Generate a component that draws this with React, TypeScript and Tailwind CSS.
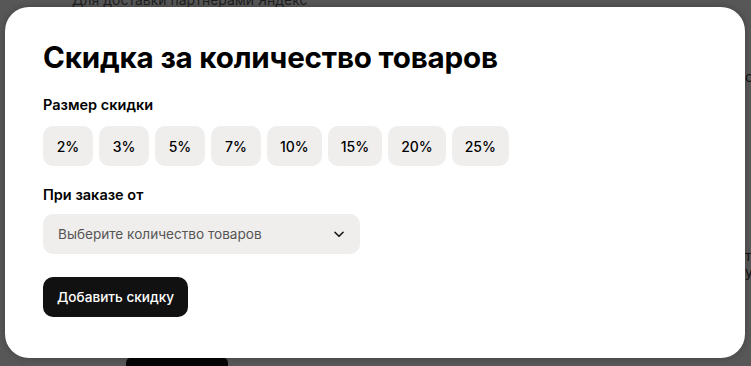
import React from "react";

const chips = ["2%", "3%", "5%", "7%", "10%", "15%", "20%", "25%"];

export default function App() {
  return (
    <div
      className="relative w-[751px] h-[366px] overflow-hidden bg-[#575757]"
      style={{ fontFamily: "Inter, 'Noto Sans', sans-serif" }}
    >
      {/* dimmed page behind the dialog */}
      <div className="absolute left-[72px] top-[-11px] text-[14px] text-[#111] opacity-80">
        Для доставки партнерами Яндекс
      </div>
      <div className="absolute left-[745px] top-[66px] text-[14px] text-[#111]">со</div>
      <div className="absolute left-[745px] top-[248px] text-[14px] text-[#111] leading-[16px]">
        т<br />у
      </div>
      <div className="absolute left-[126px] top-[357px] w-[102px] h-[20px] bg-[#050505] rounded-[6px]" />

      {/* dialog */}
      <div className="relative pt-[7px] pl-[5px]">
        <div className="w-[740px] h-[351px] bg-white rounded-[24px] pl-[38px] pt-[30px] shadow-[0_0_6px_rgba(0,0,0,0.25)]">
          <h1 className="text-[29.6px] leading-[40px] font-bold text-black tracking-[-0.2px]">
            Скидка за количество товаров
          </h1>
          <div className="mt-[18px] text-[14.5px] leading-[20px] font-semibold text-black">
            Размер скидки
          </div>
          <div className="mt-[11px] flex gap-[6px]">
            {chips.map((c) => (
              <div
                key={c}
                className="h-[40px] px-[13px] min-w-[50px] flex items-center justify-center rounded-[10px] bg-[#efeeed] text-[14px] font-medium text-black"
              >
                {c}
              </div>
            ))}
          </div>
          <div className="mt-[19px] text-[14.5px] leading-[20px] font-semibold text-black">
            При заказе от
          </div>
          <div className="mt-[9px] w-[317px] h-[40px] rounded-[10px] bg-[#efeeed] flex items-center justify-between pl-[15px] pr-[14px]">
            <span className="text-[13.6px] text-[#555]">Выберите количество товаров</span>
            <svg width="14" height="14" viewBox="0 0 24 24" fill="none" stroke="#111" strokeWidth="2.6" strokeLinecap="round" strokeLinejoin="round">
              <path d="M5 9l7 7 7-7" />
            </svg>
          </div>
          <button className="mt-[23px] h-[40px] px-[14px] rounded-[10px] bg-[#111] text-white text-[13.6px] font-medium">
            Добавить скидку
          </button>
        </div>
      </div>
    </div>
  );
}
